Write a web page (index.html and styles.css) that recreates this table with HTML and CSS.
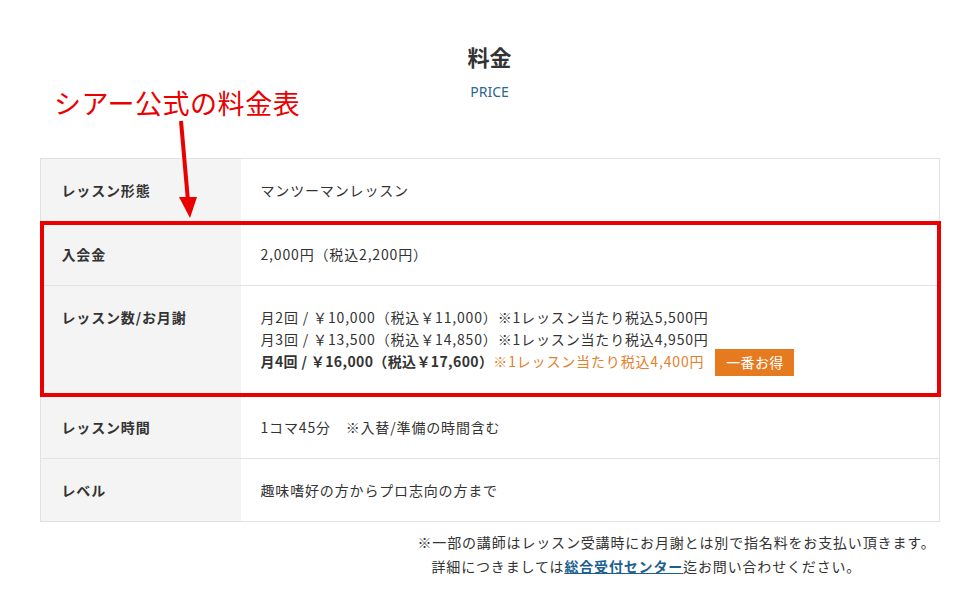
FILE: index.html
```html
<!DOCTYPE html>
<html lang="ja">
<head>
    <meta charset="UTF-8">
    <meta name="viewport" content="width=device-width, initial-scale=1.0">
    <title>料金 PRICE</title>
    <link rel="stylesheet" href="styles.css">
</head>
<body>
    <div class="price-section">
        <h2 class="section-title">料金</h2>
        <p class="section-sub">PRICE</p>

        <div class="price-table">
            <div class="price-row">
                <div class="price-label">レッスン形態</div>
                <div class="price-value">マンツーマンレッスン</div>
            </div>
            <div class="price-group">
                <div class="price-row">
                    <div class="price-label">入会金</div>
                    <div class="price-value">2,000円（税込2,200円）</div>
                </div>
                <div class="price-row">
                    <div class="price-label">レッスン数/お月謝</div>
                    <div class="price-value">
                        月2回 / ￥10,000（税込￥11,000）※1レッスン当たり税込5,500円<br>
                        月3回 / ￥13,500（税込￥14,850）※1レッスン当たり税込4,950円<br>
                        <strong>月4回 / ￥16,000（税込￥17,600）</strong><span class="best">※1レッスン当たり税込4,400円</span><span class="badge">一番お得</span>
                    </div>
                </div>
            </div>
            <div class="price-row">
                <div class="price-label">レッスン時間</div>
                <div class="price-value">1コマ45分　※入替/準備の時間含む</div>
            </div>
            <div class="price-row">
                <div class="price-label">レベル</div>
                <div class="price-value">趣味嗜好の方からプロ志向の方まで</div>
            </div>
        </div>

        <p class="price-note">※一部の講師はレッスン受講時にお月謝とは別で指名料をお支払い頂きます。<br>詳細につきましては<a href="#">総合受付センター</a>迄お問い合わせください。</p>
    </div>

    <!-- annotation -->
    <div class="memo">シアー公式の料金表</div>
    <svg class="memo-arrow" width="40" height="110" viewBox="0 0 40 110">
        <line x1="4" y1="4" x2="11" y2="84" stroke="#ea0000" stroke-width="4"/>
        <polygon points="2,80 20,80 13,101" fill="#ea0000"/>
    </svg>
</body>
</html>
```

FILE: styles.css
```css
body {
    margin: 0;
    background: #fff;
    color: #333;
    font-family: "Noto Sans CJK JP", "Noto Sans", sans-serif;
    font-size: 14px;
}
.price-section {
    width: 900px;
    margin: 0 auto;
    padding-top: 40px;
}
.section-title {
    margin: 0;
    text-align: center;
    font-size: 22px;
    line-height: 33px;
    font-weight: bold;
    color: #333;
}
.section-sub {
    margin: 8px 0 0;
    text-align: center;
    font-family: "Noto Sans", sans-serif;
    font-size: 14px;
    line-height: 22px;
    color: #2a6791;
}
.price-table {
    margin-top: 55px;
    border: 1px solid #e2e2e2;
}
.price-row {
    display: grid;
    grid-template-columns: 200px 1fr;
    border-top: 1px solid #e2e2e2;
}
.price-table > .price-row:first-child {
    border-top: none;
}
.price-label {
    background: #f4f4f4;
    padding: 20px 21px;
    font-weight: bold;
    line-height: 22px;
    letter-spacing: 0.06em;
}
.price-value {
    padding: 20px 20px 19px;
    line-height: 22px;
    letter-spacing: 0.06em;
}
.price-value strong {
    font-weight: bold;
    letter-spacing: 0.027em;
}
.best {
    color: #e2812c;
}
.badge {
    display: inline-block;
    vertical-align: top;
    margin: -1px 0 0 11px;
    padding: 2px 11px 3px;
    background: #e67a1f;
    color: #fff;
    line-height: 22px;
    letter-spacing: 0.02em;
}
.price-group {
    position: relative;
    border-top: 1px solid #e2e2e2;
}
.price-group::after {
    content: "";
    position: absolute;
    top: -1px;
    left: -1px;
    right: -2px;
    bottom: -2px;
    border: 4px solid #ea0000;
    pointer-events: none;
}
.price-note {
    width: fit-content;
    margin: 8px 4px 0 auto;
    padding-left: 1em;
    text-indent: -1em;
    line-height: 24px;
    letter-spacing: 0.06em;
}
.price-note a {
    color: #1d5f8e;
    font-weight: bold;
    text-decoration: underline;
}
.memo {
    position: absolute;
    left: 54px;
    top: 84px;
    color: #ea0000;
    font-size: 27px;
    line-height: 38px;
    letter-spacing: 0.02em;
}
.memo-arrow {
    position: absolute;
    left: 177px;
    top: 117px;
}
```
